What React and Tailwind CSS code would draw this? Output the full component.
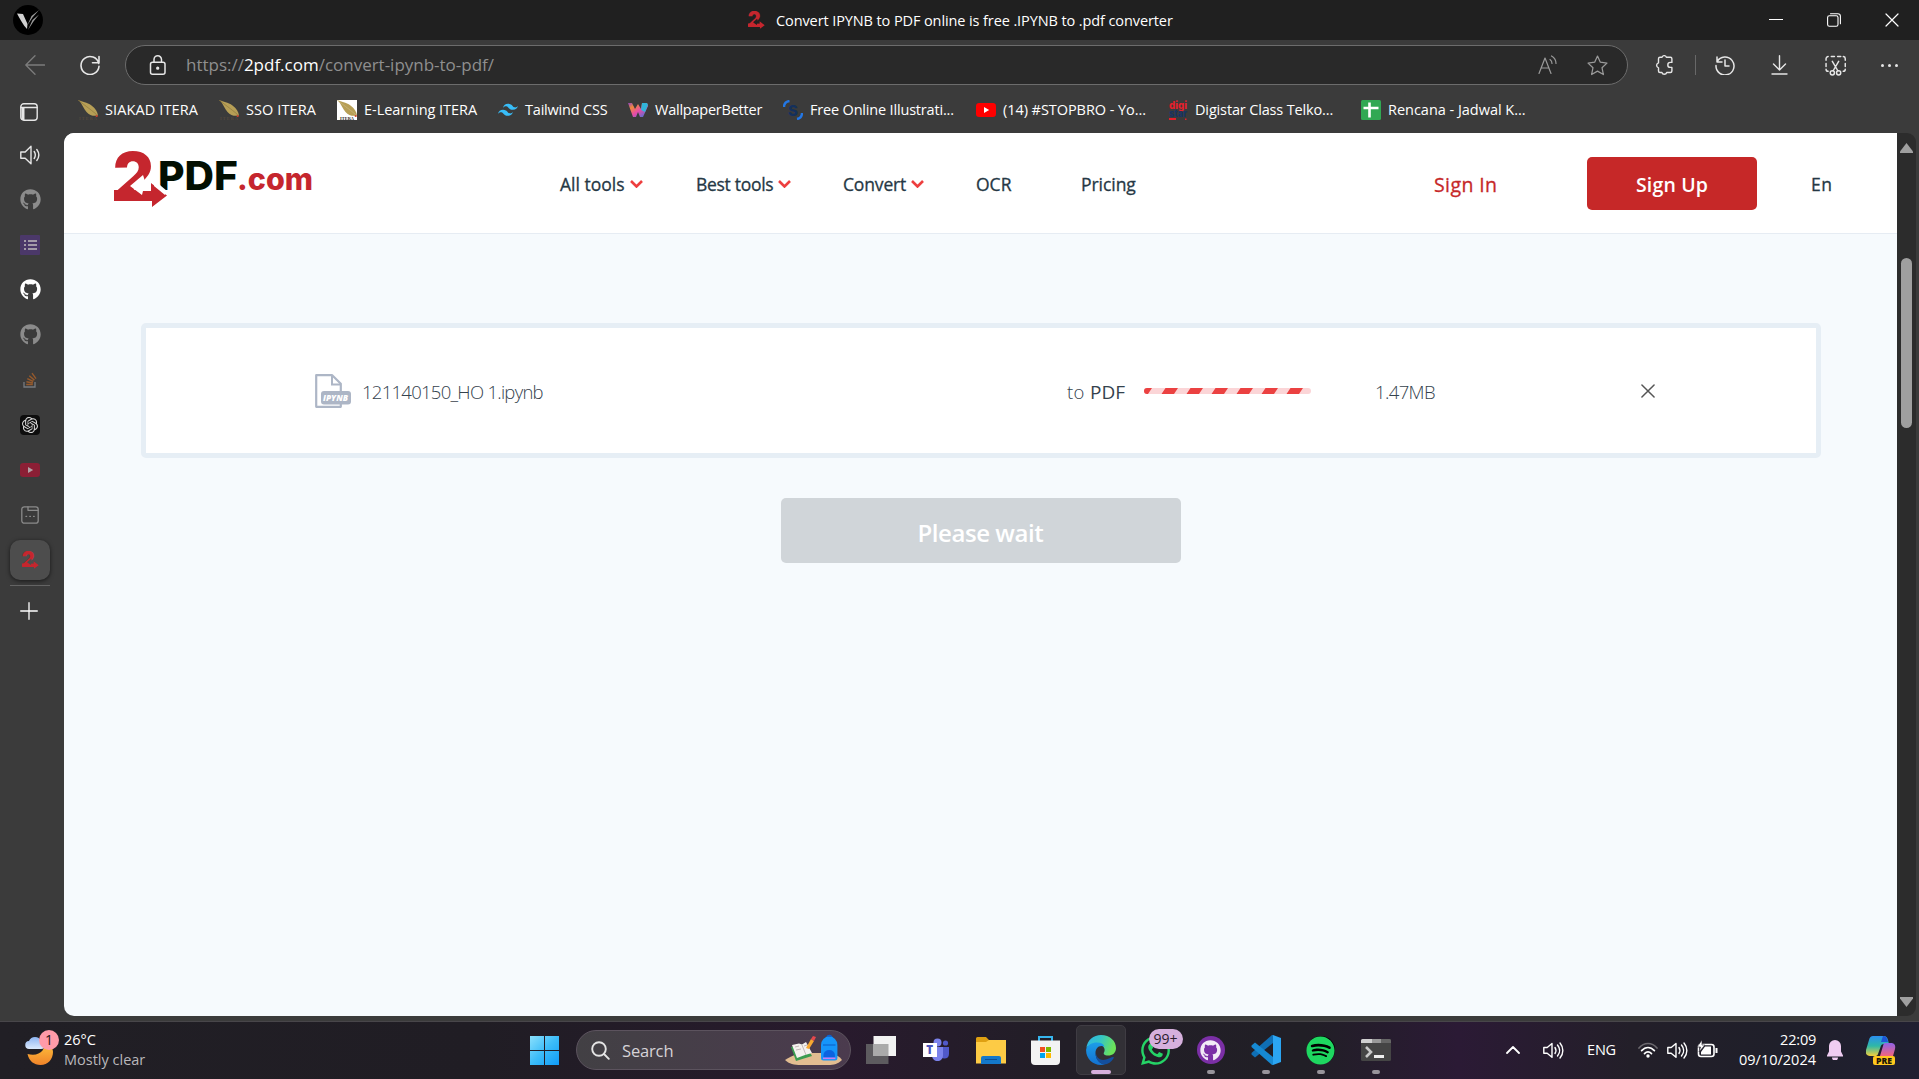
import React from "react";
import { FaGithub, FaSpotify, FaWhatsapp } from "react-icons/fa";
import { SiOpenai } from "react-icons/si";

/* Single-line label; the width class fixes the cell it occupies. */
function T({ className = "", children }) {
  return <span className={"block shrink-0 whitespace-nowrap " + className}>{children}</span>;
}

function Line({ className = "", children, box = "0 0 20 20", sw = 1.3 }) {
  return (
    <svg viewBox={box} className={"block shrink-0 " + className} fill="none" stroke="currentColor" strokeWidth={sw} strokeLinecap="round" strokeLinejoin="round">
      {children}
    </svg>
  );
}

function TwoMark({ className, notch }) {
  return (
    <svg viewBox="0 0 54 56" className={"block shrink-0 overflow-visible " + className}>
      <text x="-1" y="50" fontFamily="Inter" fontWeight="900" fontSize="67" textLength="41" lengthAdjust="spacingAndGlyphs" fill="#c5262e">2</text>
      <path d="M0 39h38v11H0z" fill="#c5262e" />
      {notch && <path d="M16 35L29 24l2 6 8 2-1 8h-9l-1 4z" fill={notch} />}
      <path d="M37 32l16 12.500L38 56v-6H29v-10l8 0z" fill="#c5262e" />
    </svg>
  );
}

function Feather({ boxed }) {
  return (
    <svg viewBox="0 0 20 20" className="block size-5 shrink-0">
      {boxed && <rect width="20" height="20" fill="#fff" />}
      <path d="M1 0C4 2 9 2 13.500 5.500c4 3 6 6 6.500 10-4 1-8.500 0-11.500-3.500C6 9 4 4 1 0z" fill="#b79f56" />
      <path d="M0 0c5 4 12 9 18 14l1 2" stroke={boxed ? "#c9b87f" : "#8f7a3d"} strokeWidth=".7" fill="none" />
      <circle cx="18.7" cy="16" r="1.1" fill="#d0432f" />
      <text x={boxed ? 3 : 1} y="19.600" fontFamily="Liberation Serif" fontWeight="700" fontSize="4.400" textLength={boxed ? 14 : 18} fill={boxed ? "#222" : "#54483e"}>ITERA</text>
    </svg>
  );
}

const TailwindIcon = () => (
  <svg viewBox="0 0 24 16" className="block w-5 shrink-0" fill="#38bdf8">
    <path d="M12 1C8.800 1 6.800 2.600 6 5.800 7.200 4.200 8.600 3.600 10.200 4c.9.2 1.600.9 2.300 1.700C13.700 6.800 15 8.200 18 8.200c3.200 0 5.200-1.600 6-4.800-1.200 1.600-2.600 2.200-4.200 1.800-.9-.2-1.600-.9-2.300-1.700C16.300 2.400 15 1 12 1zM6 8.200c-3.200 0-5.200 1.600-6 4.800 1.200-1.600 2.600-2.200 4.200-1.800.9.2 1.600.9 2.300 1.700 1.200 1.100 2.500 2.500 5.500 2.500 3.200 0 5.200-1.600 6-4.800-1.200 1.600-2.600 2.200-4.200 1.800-.9-.2-1.600-.9-2.300-1.700C10.300 9.600 9 8.200 6 8.200z" />
  </svg>
);

const WIcon = () => (
  <svg viewBox="0 0 20 20" className="block size-5 shrink-0">
    <defs>
      <linearGradient id="wg" x1="0" y1="0" x2="1" y2="1">
        <stop offset="0" stopColor="#8b3fc4" /><stop offset=".25" stopColor="#f08a3c" /><stop offset=".55" stopColor="#e84aa8" /><stop offset="1" stopColor="#2c7be0" />
      </linearGradient>
    </defs>
    <path d="M0 3h4l3 6 3-5 3 5 1-6h5l1 3-5 11h-3l-2-5-2 5H5z" fill="url(#wg)" />
    <path d="M14 3h5l1 2-3 7-4-2z" fill="#31b4d8" />
  </svg>
);

const SIcon = () => (
  <svg viewBox="0 0 20 20" className="block size-5 shrink-0">
    <path d="M1 7C1 3.500 3 1.500 6.500 1M19 13c0 3.500-2 5.500-5 6" stroke="#2377e6" strokeWidth="2.400" fill="none" />
    <text x="5" y="15.500" fontFamily="Inter" fontWeight="800" fontSize="15" fill="#14305c">S</text>
  </svg>
);

const YouTube = ({ className, bg = "#f00", fg = "#fff" }) => (
  <svg viewBox="0 0 20 14" className={"block shrink-0 " + className}>
    <rect width="20" height="14" rx="3.200" fill={bg} />
    <path d="M8 4l5.200 3L8 10z" fill={fg} />
  </svg>
);

const DigiIcon = () => (
  <svg viewBox="0 0 20 20" className="block size-5 shrink-0 overflow-visible" fontFamily="Inter" fontWeight="800">
    <text x="1" y="8.500" fontSize="10.500" textLength="18" lengthAdjust="spacingAndGlyphs" fill="#e3202c">digi</text>
    <text x="1" y="17" fontSize="10.500" textLength="18" lengthAdjust="spacingAndGlyphs" fill="#173463">star</text>
    <path d="M1 18h7v2H1z" fill="#e3202c" /><path d="M17 18.500h1.500V20H17z" fill="#e3202c" />
  </svg>
);

const SheetIcon = () => (
  <svg viewBox="0 0 20 20" className="block size-5 shrink-0">
    <rect width="20" height="20" rx="1.500" fill="#31a853" />
    <path d="M8.500 2.500v15M2.500 8h15" stroke="#fff" strokeWidth="2.600" fill="none" />
  </svg>
);

const bookmarks = [
  { icon: <Feather />, label: "SIAKAD ITERA", cls: "w-[93px] tracking-[0.110px]" },
  { icon: <Feather />, label: "SSO ITERA", cls: "w-[70px] tracking-[0.090px]" },
  { icon: <Feather boxed />, label: "E-Learning ITERA", cls: "w-[113px] tracking-[-0.040px]" },
  { icon: <TailwindIcon />, label: "Tailwind CSS", cls: "w-[82px] tracking-[-0.200px]" },
  { icon: <WIcon />, label: "WallpaperBetter", cls: "w-[107px] tracking-[-0.230px]" },
  { icon: <SIcon />, label: "Free Online Illustrati...", cls: "w-[145px] tracking-[-0.180px]" },
  { icon: <YouTube className="w-5" />, label: "(14) #STOPBRO - Yo...", cls: "w-[144px] tracking-[-0.060px]" },
  { icon: <DigiIcon />, label: "Digistar Class Telko...", cls: "w-[145px] tracking-[-0.150px]" },
  { icon: <SheetIcon />, label: "Rencana - Jadwal K...", cls: "w-[138px] tracking-[-0.020px]" },
];

function TitleBar() {
  return (
    <div className="flex h-10 items-center bg-[#202020] text-white">
      <div className="ml-[13px] flex size-[30px] items-center justify-center rounded-full bg-black">
        <svg viewBox="0 0 30 30" className="size-[30px]">
          <path d="M4 8.500l6 .5 4.500 10L14 24C10 20 7 14 4 8.500z" fill="#d0d0d0" />
          <path d="M14.500 20L18.500 11 26 5l-6.500 7.500zM15 25l4.500-10L26 9.500l-5.500 7z" fill="#9a9a9a" />
        </svg>
      </div>
      <TwoMark className="ml-[705px] h-[18px] w-[17px]" notch="#202020" />
      <T className="ml-[11px] mt-[2px] w-[397px] text-[14.500px] tracking-[-0.100px]">Convert IPYNB to PDF online is free .IPYNB to .pdf converter</T>
      <div className="ml-auto mr-[20px] flex items-center gap-[44px]">
        <Line className="size-3.5" box="0 0 14 14" sw="1.2"><path d="M0.500 6.500h13" /></Line>
        <Line className="size-3.5" box="0 0 14 14" sw="1.1"><rect x=".6" y="2.800" width="10.400" height="10.400" rx="1.800" /><path d="M3.500.7h7.300a2.600 2.600 0 0 1 2.600 2.600v7.500" /></Line>
        <Line className="size-3.5" box="0 0 14 14" sw="1.2"><path d="M1 1l12 12M13 1L1 13" /></Line>
      </div>
    </div>
  );
}

function Toolbar() {
  return (
    <div className="flex h-[50px] items-center text-[#e6e6e6]">
      <Line className="ml-[25px] size-5 text-[#7c7c7c]"><path d="M19.500 10H.8M10 .8L.8 10l9.200 9.200" /></Line>
      <Line className="ml-[35px] size-5" sw="1.600"><path d="M18.800 8.500A9 9 0 1 0 19 11.200M19 1.500v6.200h-6.500" /></Line>
      <div className="ml-[25px] flex h-10 w-[1503px] items-center rounded-full border border-[#6c6c6c] bg-[#292929]">
        <Line className="mb-px ml-[22px] size-5" sw="1.500"><rect x="2.500" y="7.200" width="14.500" height="12" rx="2" /><path d="M6 7V4.500a3.700 3.700 0 0 1 7.500 0V7" /><circle cx="9.700" cy="13.200" r=".9" fill="currentColor" /></Line>
        <T className="mb-px ml-[18px] w-[307px] text-[17px] tracking-[-0.010px] text-[#8f8f8f]">
          https://<span className="text-white">2pdf.com</span>/convert-ipynb-to-pdf/
        </T>
        <Line className="ml-auto size-5 text-[#9a9a9a]" sw="1.200"><path d="M1 18.500L7 3l6 15.500M3.200 13h7.600M12 4.500c1.400 1 2 2.300 2 4M13.500 1c3 1.700 4.500 4 4.500 7.500" /></Line>
        <Line className="ml-[29px] mr-[19px] size-[21px] text-[#9a9a9a]" sw="1.200"><path d="M10 1l2.700 5.900 6.300.8-4.700 4.400 1.300 6.500L10 15.400l-5.600 3.200 1.300-6.500L1 7.700l6.300-.8z" /></Line>
      </div>
      <Line className="ml-[26px] size-5" sw="1.400"><path d="M4.500 4.500V3.800a1.500 1.500 0 0 1 1.500-1.500h2a2.300 2.300 0 0 1 4.400 0h4a1.500 1.500 0 0 1 1.500 1.500v3.600h-1.600a2.500 2.500 0 0 0 0 5h1.600V16a1.500 1.500 0 0 1-1.500 1.500h-3.700a2.500 2.500 0 0 1-4.800 0H6A1.500 1.500 0 0 1 4.500 16v-3.200a2.600 2.600 0 0 1 0-5z" /></Line>
      <div className="ml-[21px] h-5 w-px bg-[#686868]" />
      <Line className="ml-[19px] size-5" sw="1.500"><path d="M2 2v5h5M2.200 6.500A9 9 0 1 1 1 10.500M10 5v6h4" /></Line>
      <Line className="ml-[35px] size-5" sw="1.400"><path d="M9.500.8v14M3.500 9l6 6 6-6M2 19h15" /></Line>
      <Line className="ml-[35px] size-[21px]" sw="1.400"><path d="M1 5V3.500A2 2 0 0 1 3 1.500M6 1.500h3M12 1.500h3M17.500 1.500A2 2 0 0 1 19.300 3.500V5M19.300 8v3M19.300 13.500a2 2 0 0 1-2 2M1 8v3M1 13.500a2 2 0 0 0 2 2M7 6l5.200 9M13 6l-5.200 9" /><circle cx="7" cy="17" r="2" /><circle cx="13" cy="17" r="2" /></Line>
      <div className="ml-[35px] flex gap-[4px]">
        <i className="size-[3px] rounded-full bg-current" /><i className="size-[3px] rounded-full bg-current" /><i className="size-[3px] rounded-full bg-current" />
      </div>
    </div>
  );
}

function Speaker({ className = "" }) {
  return <Line className={className} sw="1.400"><path d="M.8 7v6.200h4.400l5.800 5.500V1.300L5.200 7zM14.200 6.500c1.400 2.200 1.400 4.800 0 7M16.800 4.500c2.600 3.500 2.600 7.500 0 11" /></Line>;
}

function Sidebar() {
  return (
    <div className="flex w-16 shrink-0 flex-col text-[#e6e6e6]">
      <div className="flex h-[44px] w-[58px] items-center justify-center">
        <Line className="size-[18px]" box="0 0 18 18" sw="1.400"><rect x=".8" y=".8" width="16.400" height="16.400" rx="3" /><path d="M1 4.500h16" /><path d="M1.500 5h3v12h-3z" fill="currentColor" stroke="none" /></Line>
      </div>
      <div className="flex h-[43px] w-[60px] items-center justify-center pb-0.5">
        <Speaker className="size-5" />
      </div>
      <div className="flex w-[60px] flex-col items-center text-[#8b8b8b]">
        <div className="flex h-[45px] items-center"><FaGithub className="size-[21px]" /></div>
        <div className="flex h-[45px] items-center">
          <svg viewBox="0 0 20 20" className="size-5"><rect width="20" height="20" rx="1" fill="#4b3869" /><path d="M4 5h2v2H4zM8 5h9v2H8zM4 9h2v2H4zM8 9h9v2H8zM4 13h2v2H4zM8 13h9v2H8z" fill="#a39ba8" /></svg>
        </div>
        <div className="flex h-[45px] items-center text-white"><FaGithub className="size-[21px]" /></div>
        <div className="flex h-[45px] items-center"><FaGithub className="size-[21px]" /></div>
        <div className="flex h-[45px] items-center">
          <svg viewBox="0 0 14 16" className="h-4 w-3.5" fill="none"><path d="M1 10v5h11v-5" stroke="#777b80" strokeWidth="1.300" /><path d="M3.200 12.500h6.600M3.400 9.700l6.500 1.300M4.300 6.600l6 2.900M6.300 3.800l5.100 4.300M9 1.200l4 5.400" stroke="#965a2c" strokeWidth="1.400" /></svg>
        </div>
        <div className="flex h-[45px] items-center">
          <div className="flex size-5 items-center justify-center rounded bg-[#0d0d0d] text-[#d8d8d8]"><SiOpenai className="size-4" /></div>
        </div>
        <div className="flex h-[45px] items-center"><YouTube className="w-5" bg="#8b1f35" fg="#b0a0a4" /></div>
        <div className="flex h-[45px] items-center">
          <Line className="size-[18px]" box="0 0 18 18" sw="1.300"><rect x=".8" y=".8" width="16.400" height="16.400" rx="2.500" /><path d="M7 1v3.300h10M5 10.400h.6M8.800 10.400h.6M12.600 10.400h.6" /></Line>
        </div>
      </div>
      <div className="ml-2.5 mt-[3px] flex size-10 items-center justify-center rounded-[10px] bg-[#4d4d4d] shadow-[0_1px_4px_rgba(0,0,0,0.600)]">
        <TwoMark className="h-[18px] w-[17px]" notch="#4d4d4d" />
      </div>
      <div className="ml-2.5 mt-[5px] h-px w-10 bg-[#646464]" />
      <Line className="ml-5 mt-4 size-[18px] text-white" box="0 0 18 18" sw="1.300"><path d="M9 .7v16.600M.7 9h16.600" /></Line>
    </div>
  );
}

const Chevron = () => <Line className="mb-[3px] ml-[5px] h-[8px] w-[13px] text-[#ed3f3f]" box="0 0 13 8" sw="2.600"><path d="M1 1l5.500 5.500L12 1" strokeLinecap="butt" strokeLinejoin="miter" /></Line>;

function SiteHeader() {
  return (
    <div className="flex h-[101px] items-center border-b border-[#e6ecf3] bg-white text-[17.500px] text-[#263845]">
      <div className="mb-[8px] ml-[50px] flex h-14 w-[199px]">
        <TwoMark className="h-14 w-[54px]" notch="#fff" />
        <svg viewBox="0 0 158 56" className="-ml-[12px] h-14 w-[158px] shrink-0 overflow-visible">
          <text x="2" y="38.500" fontFamily="Inter" fontWeight="800" fontSize="39.500" textLength="80" lengthAdjust="spacingAndGlyphs" fill="#020f02">PDF</text>
          <text x="81" y="38.500" fontFamily="Inter" fontWeight="800" fontSize="30" textLength="76" lengthAdjust="spacingAndGlyphs" fill="#c5262e">.com</text>
          <path d="M-2 29l13 11-2 4-11-9z" fill="#fff" />
        </svg>
      </div>
      <div className="mt-[4px] flex items-center [-webkit-text-stroke:0.300px_currentColor]">
        <T className="ml-[247px] w-[65px]">All tools</T><Chevron />
        <T className="ml-[53px] w-[77px] tracking-[-0.300px]">Best tools</T><Chevron />
        <T className="ml-[52px] w-[63px] tracking-[-0.150px]">Convert</T><Chevron />
        <T className="ml-[52px] w-[35px]">OCR</T>
        <T className="ml-[70px] w-[55px] tracking-[-0.050px]">Pricing</T>
        <T className="ml-[298px] w-[63px] text-[19.500px] tracking-[0.400px] text-[#c62828]">Sign In</T>
      </div>
      <div className="ml-[90px] flex h-[53px] w-[170px] items-center justify-center rounded-[5px] bg-[#c62828] text-[19.500px] font-semibold tracking-[0.150px] text-white"><T className="mt-[3px] w-[72px]">Sign Up</T></div>
      <T className="ml-[54px] mt-[3px] w-[22px] tracking-[0.500px] [-webkit-text-stroke:0.300px_currentColor]">En</T>
    </div>
  );
}

function FileRow() {
  return (
    <div className="ml-[77px] mt-[89px] flex h-[135px] w-[1680px] items-center rounded-[5px] border-[5px] border-[#e6eef5] bg-white text-[18.500px] font-light text-[#34424d]">
      <svg viewBox="0 0 36 34" className="ml-[169px] h-[34px] w-9 shrink-0">
        <path d="M1.200 1.200h16l8.600 8.600V32.800H1.200z" fill="none" stroke="#adb6c6" strokeWidth="2.200" strokeLinejoin="round" />
        <path d="M17 1.500V10.500h8.500" fill="none" stroke="#adb6c6" strokeWidth="2" />
        <rect x="6" y="17" width="30" height="13.500" rx="3" fill="#adb6c6" />
        <text x="8" y="26.500" fontFamily="Open Sans" fontWeight="800" fontStyle="italic" fontSize="9.500" textLength="25" lengthAdjust="spacingAndGlyphs" fill="#fff">IPYNB</text>
      </svg>
      <T className="ml-[11px] mt-[3px] w-[182px] tracking-[-0.730px]">121140150_HO 1.ipynb</T>
      <T className="ml-[523px] mt-[3px] w-[18px] tracking-[0.300px]">to</T>
      <T className="ml-[5px] mt-[3px] w-[35px] text-[19px] font-normal">PDF</T>
      <div className="ml-[19px] h-1.5 w-[167px] overflow-hidden rounded-[3px] bg-[#fbd5d7]">
        <svg viewBox="0 0 167 6" className="h-1.5 w-[167px]" fill="#eb4141">
          <path d="M0 0h8l-4 6H0zM21.500 0h12.500l-4 6H17.500zM46.500 0H59l-4 6H42.500zM71.500 0H84l-4 6H67.500zM96.500 0H109l-4 6H92.500zM121.500 0H134l-4 6H117.500zM146.500 0H159l-4 6H142.500z" />
        </svg>
      </div>
      <T className="ml-[64px] mt-[3px] w-[60px] tracking-[-0.620px]">1.47MB</T>
      <Line className="ml-[206px] mt-px size-[14px] text-[#555]" box="0 0 15 15" sw="1.600"><path d="M1 1l13 13M14 1L1 14" /></Line>
    </div>
  );
}

function ScrollBar() {
  return (
    <div className="flex w-[19px] shrink-0 flex-col items-center rounded-r-[9px] bg-[#2c2c2c] text-[#a0a0a0]">
      <svg viewBox="0 0 13 10" className="mt-[10px] h-2.5 w-[13px]" fill="currentColor"><path d="M6.500 0L13 8.500V10H0V8.500z" /></svg>
      <div className="mt-[105px] h-[170px] w-[11px] rounded-full bg-[#9f9f9f]" />
      <svg viewBox="0 0 13 10" className="mb-[9px] mt-auto h-2.5 w-[13px]" fill="currentColor"><path d="M6.500 10L13 1.500V0H0v1.500z" /></svg>
    </div>
  );
}

function AppCell({ children, dot, active }) {
  return (
    <div className="flex w-[55px] shrink-0 justify-center">
      <div className={"relative flex size-[50px] items-center justify-center rounded-[5px] border " + (active ? "border-[#3f3c43] bg-[#323036]" : "border-transparent")}>
        {children}
        {dot && <div className="absolute bottom-0 h-1 w-2 rounded-full bg-[#98949b]" />}
        {active && <div className="absolute bottom-0 h-1 w-5 rounded-full bg-[#d6afdc]" />}
      </div>
    </div>
  );
}

function Tray({ className = "" }) {
  return <Line className={"size-[21px] " + className} sw="1.400" box="0 0 21 21"><path d="M.8 7.500v5.800h3.400l4.800 4V3.500l-4.800 4zM12 7.500c1.300 2 1.300 4 0 6M14.500 5c2.800 3.500 2.800 7.500 0 11M17 3c3.800 4.500 3.800 10.500 0 15" /></Line>;
}

function Taskbar() {
  return (
    <div className="flex h-[58px] items-center border-t border-[#48464a] bg-[linear-gradient(90deg,#211f25_0%,#201d24_25%,#281a2d_44%,#221e27_55%,#211f26_68%,#2b1a35_76%,#231f29_85%,#1f1f2a_93%,#201f31_100%)] pb-px text-[14.500px] text-white">
      <div className="relative mb-[5px] ml-[25px] h-9 w-[39px] shrink-0">
        <svg viewBox="0 0 36 36" className="h-9 w-9">
          <defs>
            <linearGradient id="moon" x1="0" y1="0" x2="0" y2="1"><stop offset="0" stopColor="#ffc83d" /><stop offset="1" stopColor="#f0832a" /></linearGradient>
            <linearGradient id="cl" x1="0" y1="0" x2="0" y2="1"><stop offset="0" stopColor="#8eb5f2" /><stop offset="1" stopColor="#dce9fc" /></linearGradient>
          </defs>
          <path d="M2.500 24c12 3 19-4 16-13C25 13 28 18 28 22c0 7-5 13-12.500 13C9 35 4 31 2.500 24z" fill="url(#moon)" />
          <path d="M4.500 19a4 4 0 0 1-.5-8 6.500 6.500 0 0 1 12 0 4 4 0 0 1 0 8z" fill="url(#cl)" />
        </svg>
        <div className="absolute left-[14px] top-0 flex size-5 items-center justify-center rounded-full bg-[#ff9aa8] text-sm text-[#2a1216]">1</div>
      </div>
      <div className="flex flex-col gap-[6px]">
        <T className="w-[32px]">26°C</T>
        <T className="w-[81px] text-[#b9b7bb]">Mostly clear</T>
      </div>
      <svg viewBox="0 0 29 29" className="ml-[385px] size-[29px] shrink-0">
        <defs><linearGradient id="win" x1="0" y1="0" x2="1" y2="1"><stop offset="0" stopColor="#8be0fc" /><stop offset=".5" stopColor="#3cbcf8" /><stop offset="1" stopColor="#0f9bf8" /></linearGradient></defs>
        <path d="M0 0h14v14H0zM15 0h14v14H15zM0 15h14v14H0zM15 15h14v14H15z" fill="url(#win)" />
      </svg>
      <div className="ml-[17px] flex h-10 w-[275px] shrink-0 items-center rounded-full border border-[#5c535e] bg-[linear-gradient(90deg,#424044,#4b3b4e)]">
        <Line className="ml-[14px] size-[19px] text-[#e4e4e4]" box="0 0 19 19" sw="1.900"><circle cx="8" cy="8" r="6.800" /><path d="M13 13l4.800 4.800" /></Line>
        <T className="ml-[12px] mt-[2px] w-[51px] text-[16.500px] tracking-[-0.150px] text-[#d6d3d7]">Search</T>
        <svg viewBox="0 0 58 32" className="ml-auto mr-[7px] h-8 w-[58px]">
          <path d="M0 26c8-5 14-7 24-7h20c6 1 10 3 13 7-4 4-8 5-14 5H16C9 31 4 30 0 26z" fill="#e2bd91" />
          <path d="M6 13l14-3 7 12-16 5z" fill="#3b9c50" />
          <path d="M7 11l7-1.500 3 1 4-2.500 6 11-7 2-8 3z" fill="#f4f1ee" />
          <path d="M17 11l4 10M10 13l4-1M11 16l5-1M19 12l3-1" stroke="#b5a8a8" strokeWidth=".8" fill="none" />
          <path d="M21 14l5-9 3 2-5 8z" fill="#f8a831" /><path d="M26 5l2-3 3 1-2 4z" fill="#e5484d" />
          <path d="M42 4a2.500 2.500 0 0 1 5 0" stroke="#0d5fd0" fill="none" strokeWidth="1.400" />
          <path d="M36 11a8.200 8.500 0 0 1 16.400 0v13a2.500 2.500 0 0 1-2.500 2.500H38.500A2.500 2.500 0 0 1 36 24z" fill="#1595fa" />
          <path d="M38 11h12.500" stroke="#0d66cf" strokeWidth="1.200" />
          <path d="M38.500 21a5.700 5 0 0 1 11.400 0v2.500H38.500z" fill="#0b63e0" /><path d="M38 23.500h12.400v1.600H38z" fill="#c77df2" />
        </svg>
      </div>
      <div className="ml-[2px] flex">
        <AppCell><svg viewBox="0 0 30 28" className="h-7 w-[30px]"><rect x="0" y="8" width="22.500" height="20" fill="#5d5b5f" /><rect x="7.500" y="0" width="22.500" height="20" fill="#f2f2f2" /><path d="M7.500 8h15v12h-15z" fill="#aaa" /></svg></AppCell>
        <AppCell><svg viewBox="0 0 26 24" className="h-6 w-[26px]"><circle cx="14.500" cy="4.500" r="4" fill="#7b83eb" /><circle cx="22.500" cy="5" r="2.600" fill="#5059c9" /><path d="M17 9h9v7c0 3-2 4.500-4.500 4.500S17 19 17 16z" fill="#5059c9" /><path d="M9 9h11v8c0 4-2.500 6-5.500 6S9 21 9 17z" fill="#7b83eb" /><path d="M0 5h14v14H0z" fill="#fff" /><text x="3.300" y="16" fontFamily="Open Sans" fontWeight="800" fontSize="11.500" fill="#4b53bc">T</text></svg></AppCell>
        <AppCell><svg viewBox="0 0 30 27" className="h-[27px] w-[30px]"><path d="M0 1.500A1.500 1.500 0 0 1 1.500 0H10l3 3v4H0z" fill="#dfa012" /><path d="M0 5h10l3-2h17v23.500H0z" fill="#fdcb45" /><path d="M5 27v-6a2 2 0 0 1 2-2h16a2 2 0 0 1 2 2v6z" fill="#1478ca" /><path d="M9 22.500h12" stroke="#0c4f95" /></svg></AppCell>
        <AppCell><svg viewBox="0 0 29 29" className="size-[29px]"><path d="M8 5V1h13v4" fill="none" stroke="#36b5ee" strokeWidth="2" /><path d="M0 4.500h29V25a4 4 0 0 1-4 4H4a4 4 0 0 1-4-4z" fill="#f3f3f3" /><path d="M9 11h5v5H9z" fill="#f25022" /><path d="M15 11h5v5h-5z" fill="#7fba00" /><path d="M9 17h5v5H9z" fill="#00a4ef" /><path d="M15 17h5v5h-5z" fill="#ffb900" /></svg></AppCell>
        <AppCell active>
          <svg viewBox="0 0 30 30" className="size-[30px]">
            <defs>
              <linearGradient id="e1" x1="0" y1="0" x2="1" y2=".3"><stop offset="0" stopColor="#2db5e8" /><stop offset=".5" stopColor="#35c5c5" /><stop offset="1" stopColor="#6be35a" /></linearGradient>
              <linearGradient id="e2" x1="0" y1="0" x2="0" y2="1"><stop offset="0" stopColor="#1c9de8" /><stop offset="1" stopColor="#1371d0" /></linearGradient>
            </defs>
            <path d="M.3 13C1.500 5 7.500 0 15 0c9 0 15 6 15 13 0 5-3.500 7.500-8 7.500-3.500 0-5-1.500-4-3 1.800-3 0-8-6-8C6 9.500 1.500 11 .3 13z" fill="url(#e1)" />
            <path d="M.2 14C1.500 10 6 7.500 11 7.500c4 0 6.500 1.500 7.500 4-6-2-9 2-9 6.500 0 6 4 11 9.500 11.300-1.200.5-2.500.7-4 .7C6 30-.7 22.500.2 14z" fill="url(#e2)" />
            <path d="M10 17c-.5 5 4 9.500 10 7.500 3-1 5.500-2.500 7-2.500.8 0 1 .7.600 1.300C25.500 27 22 29.300 18 29.500 12 28 8.500 22 10 17z" fill="#134f9e" />
          </svg>
        </AppCell>
        <AppCell>
          <FaWhatsapp className="mt-px size-[33px] text-[#25d366]" />
          <div className="absolute left-[17px] top-[3px] flex h-5 w-[34px] items-center justify-center rounded-full bg-[#d6b0dd] text-[14px] text-[#2a1c2d]">99+</div>
        </AppCell>
        <AppCell dot><div className="flex size-7 items-center justify-center rounded-full bg-[#7b2fa6]"><FaGithub className="size-[21px] text-[#f2eaf6]" /></div></AppCell>
        <AppCell dot><svg viewBox="0 0 30 30" className="size-[30px]"><path d="M22 0v8L4 22.500.5 19.500v-1.500L21 0z" fill="#0f6fb5" /><path d="M22 30v-8L4 7.500.5 10.500V12L21 30z" fill="#1689d2" /><path d="M22 0l8 3v24l-8 3z" fill="#2ba5f2" /></svg></AppCell>
        <AppCell dot><div className="flex size-7 items-center justify-center rounded-full bg-black"><FaSpotify className="size-[29px] shrink-0 text-[#1ed760]" /></div></AppCell>
        <AppCell dot><svg viewBox="0 0 30 22" className="h-[22px] w-[30px]"><rect width="30" height="22" rx="1.500" fill="#454545" /><path d="M0 4V1.500A1.500 1.500 0 0 1 1.500 0H11v4z" fill="#d0d0d0" /><path d="M11 0h9v4h-9z" fill="#999" /><path d="M20 0h8.500A1.500 1.500 0 0 1 30 1.500V4H20z" fill="#666" /><path d="M5 8l5 5-5 5" fill="none" stroke="#c9c9c9" strokeWidth="2.600" /><path d="M13 16h10v3H13z" fill="#eee" /></svg></AppCell>
      </div>
      <Line className="ml-[103px] h-2 w-[14px]" box="0 0 14 8" sw="1.800"><path d="M1 7l6-6 6 6" /></Line>
      <Tray className="ml-[23px]" />
      <T className="ml-[23px] mt-px w-[29px] tracking-[-0.180px]">ENG</T>
      <svg viewBox="0 0 20 16" className="ml-[22px] h-4 w-5 shrink-0" fill="none" strokeWidth="1.700" strokeLinecap="round"><path d="M1 6c5-6 13-6 18 0" stroke="#6b686e" /><path d="M3.600 8.700c4-4.300 8.800-4.300 12.800 0M6.500 11.600c2.200-2.300 4.800-2.300 7 0" stroke="#fff" /><circle cx="10" cy="14" r="1.700" fill="#fff" /></svg>
      <Tray className="ml-[9px]" />
      <svg viewBox="0 0 21 18" className="mb-[3px] ml-[9px] h-[18px] w-[21px] shrink-0"><rect x="1.500" y="4.500" width="15.500" height="12" rx="2.500" fill="none" stroke="#fff" strokeWidth="1.600" /><path d="M8 6.500h6v8H4V12zM18.500 8h2v5h-2z" fill="#fff" /><path d="M5 0L0 7h3.500L2 12l6-7H5z" fill="#fff" stroke="#221f28" strokeWidth=".6" /></svg>
      <div className="ml-auto flex flex-col items-end gap-[6px]">
        <T className="w-[36px] tracking-[-0.150px]">22:09</T>
        <T className="w-[77px]">09/10/2024</T>
      </div>
      <svg viewBox="0 0 16 20" className="ml-[11px] h-5 w-4 shrink-0" fill="#f0cdf2"><path d="M8 0a6 6 0 0 1 6 6v5.500l2 4V16.500H0v-1l2-4V6a6 6 0 0 1 6-6zM5 17.500h6a3 3 0 0 1-6 0z" /></svg>
      <svg viewBox="0 0 30 29" className="ml-[23px] mr-[23px] h-[29px] w-[30px] shrink-0">
        <defs>
          <linearGradient id="c1" x1="0" y1="0" x2="0" y2="1"><stop offset="0" stopColor="#2b8ff0" /><stop offset=".5" stopColor="#2fb8a6" /><stop offset="1" stopColor="#f4d03c" /></linearGradient>
          <linearGradient id="c2" x1="0" y1="0" x2="0" y2="1"><stop offset="0" stopColor="#8f62e8" /><stop offset="1" stopColor="#f2667c" /></linearGradient>
        </defs>
        <path d="M7 0h11c2 0 3 1 4 4l1 4h-5c-2 0-3 1-3.500 3L12 18c-.5 1.500-1.500 2-3 2H4c-3 0-5-2-4-6L3 4c.6-2.500 2-4 4-4z" fill="url(#c1)" />
        <path d="M17 0c3 0 4 2 5 6h-7z" fill="#1d56d6" />
        <path d="M19 7h6c3 0 5 2 4 6l-2 7H14l3-10c.5-2 1-3 2-3z" fill="url(#c2)" />
        <rect x="7" y="20" width="22" height="9" rx="2" fill="#ffc81e" />
        <text x="10" y="27.500" fontFamily="Open Sans" fontWeight="800" fontSize="8" textLength="16" lengthAdjust="spacingAndGlyphs" fill="#1c1608">PRE</text>
      </svg>
    </div>
  );
}

export default function App() {
  return (
    <div className="flex h-[1079px] w-[1919px] flex-col overflow-hidden bg-[#3b3b3b] font-['Open_Sans','Noto_Sans',sans-serif] leading-none">
      <TitleBar />
      <div className="flex h-[981px] flex-col">
        <Toolbar />
        <div className="flex w-full flex-1">
          <Sidebar />
          <div className="flex flex-1 flex-col">
            <div className="flex h-[43px] items-center pb-[3px] text-[14.500px] text-white">
              {bookmarks.map((b) => (
                <div key={b.label} className="ml-[14px] mr-[7px] flex items-center gap-[7px]">
                  {b.icon}
                  <T className={b.cls}>{b.label}</T>
                </div>
              ))}
            </div>
            <div className="flex h-[883px] w-[1852px]">
              <div className="flex w-[1833px] flex-col overflow-hidden rounded-l-[10px] bg-[#f6fafd]">
                <SiteHeader />
                <FileRow />
                <div className="ml-[717px] mt-[40px] flex h-[65px] w-[400px] items-center justify-center rounded-[5px] bg-[#d0d5d9] text-[24px] font-semibold tracking-[-0.450px] text-white">
                  <T className="mt-[4px] w-[127px]">Please wait</T>
                </div>
              </div>
              <ScrollBar />
            </div>
          </div>
        </div>
      </div>
      <Taskbar />
    </div>
  );
}
